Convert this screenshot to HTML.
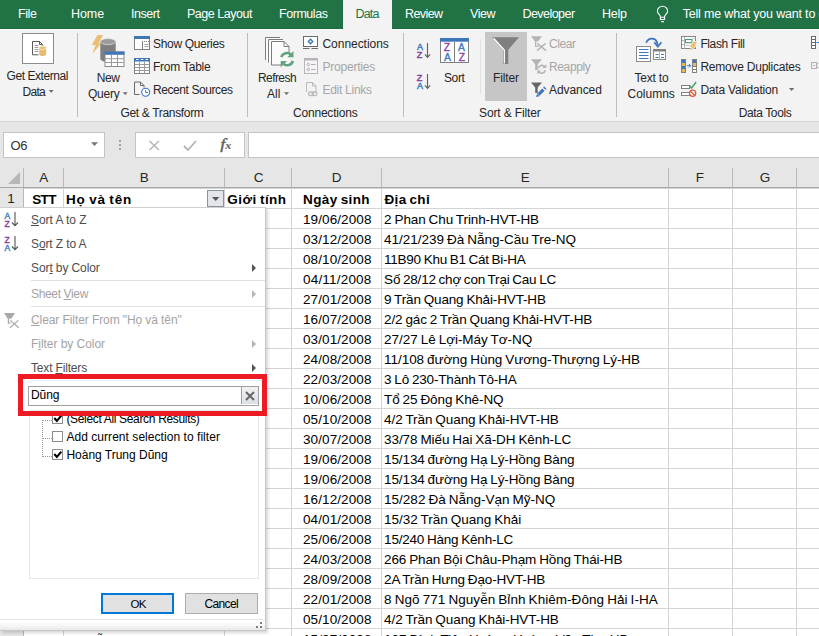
<!DOCTYPE html>
<html lang="vi">
<head>
<meta charset="utf-8">
<title>Excel – Filter</title>
<style>
html,body{margin:0;padding:0;}
body{width:819px;height:636px;overflow:hidden;position:relative;background:#e6e6e6;font-family:"Liberation Sans","DejaVu Sans",sans-serif;}
.a{position:absolute;}
.t{position:absolute;white-space:pre;line-height:16px;height:16px;color:#262626;font-size:12px;}
.t u{text-decoration:underline;text-underline-offset:1px;}
svg{position:absolute;overflow:visible;}
</style>
</head>
<body>
<!-- tab bar -->
<div class="a" style="left:0;top:0;width:819px;height:28px;background:#217346;"></div>
<div class="a" style="left:0;top:28px;width:819px;height:1px;background:#1c6b3d;"></div>
<div class="a" style="left:343px;top:0;width:49px;height:29px;background:#f3f3f3;"></div>
<!-- ribbon -->
<div class="a" style="left:0;top:29px;width:819px;height:92px;background:#f3f3f3;"></div>
<div class="a" style="left:0;top:29px;width:343px;height:1px;background:#fbfbfb;"></div>
<div class="a" style="left:392px;top:29px;width:427px;height:1px;background:#fbfbfb;"></div>
<div class="a" style="left:0;top:121px;width:819px;height:1px;background:#d4d4d4;"></div>
<!-- ribbon separators -->
<div class="a" style="left:77px;top:33px;width:1px;height:84px;background:#bcbcbc;"></div>
<div class="a" style="left:247px;top:33px;width:1px;height:84px;background:#bcbcbc;"></div>
<div class="a" style="left:403px;top:33px;width:1px;height:84px;background:#bcbcbc;"></div>
<div class="a" style="left:616px;top:33px;width:1px;height:84px;background:#bcbcbc;"></div>
<div class="a" style="left:480px;top:39px;width:1px;height:55px;background:#e0e0e0;"></div>
<!-- Get External Data icon box -->
<div class="a" style="left:22px;top:33px;width:30px;height:29px;background:#fff;border:1px solid #8c8c8c;"></div>
<!-- Filter pressed bg -->
<div class="a" style="left:485px;top:32px;width:42px;height:69px;background:#c6c6c6;"></div>
<!-- formula bar -->
<div class="a" style="left:3px;top:132px;width:100px;height:24px;background:#fff;border:1px solid #c4c4c4;"></div>
<div class="a" style="left:135px;top:132px;width:108px;height:24px;background:#fff;border:1px solid #c4c4c4;"></div>
<div class="a" style="left:248px;top:132px;width:580px;height:24px;background:#fff;border:1px solid #c4c4c4;"></div>
<!-- grid -->
<div class="a" style="left:0;top:168px;width:819px;height:20px;background:#e6e6e6;"></div>
<div class="a" style="left:0;top:188px;width:24px;height:448px;background:#e6e6e6;"></div>
<div class="a" id="cells" style="left:24px;top:188px;width:795px;height:448px;background:#fff;
 background-image:linear-gradient(#d4d4d4,#d4d4d4);background-size:100% 1px;background-repeat:no-repeat;"></div>
<div class="a" style="left:24px;top:208px;width:795px;height:1px;background:#d4d4d4;"></div>
<div class="a" style="left:0px;top:208px;width:24px;height:1px;background:#c8c8c8;"></div>
<div class="a" style="left:24px;top:228px;width:795px;height:1px;background:#d4d4d4;"></div>
<div class="a" style="left:0px;top:228px;width:24px;height:1px;background:#c8c8c8;"></div>
<div class="a" style="left:24px;top:248px;width:795px;height:1px;background:#d4d4d4;"></div>
<div class="a" style="left:0px;top:248px;width:24px;height:1px;background:#c8c8c8;"></div>
<div class="a" style="left:24px;top:268px;width:795px;height:1px;background:#d4d4d4;"></div>
<div class="a" style="left:0px;top:268px;width:24px;height:1px;background:#c8c8c8;"></div>
<div class="a" style="left:24px;top:288px;width:795px;height:1px;background:#d4d4d4;"></div>
<div class="a" style="left:0px;top:288px;width:24px;height:1px;background:#c8c8c8;"></div>
<div class="a" style="left:24px;top:308px;width:795px;height:1px;background:#d4d4d4;"></div>
<div class="a" style="left:0px;top:308px;width:24px;height:1px;background:#c8c8c8;"></div>
<div class="a" style="left:24px;top:328px;width:795px;height:1px;background:#d4d4d4;"></div>
<div class="a" style="left:0px;top:328px;width:24px;height:1px;background:#c8c8c8;"></div>
<div class="a" style="left:24px;top:348px;width:795px;height:1px;background:#d4d4d4;"></div>
<div class="a" style="left:0px;top:348px;width:24px;height:1px;background:#c8c8c8;"></div>
<div class="a" style="left:24px;top:368px;width:795px;height:1px;background:#d4d4d4;"></div>
<div class="a" style="left:0px;top:368px;width:24px;height:1px;background:#c8c8c8;"></div>
<div class="a" style="left:24px;top:388px;width:795px;height:1px;background:#d4d4d4;"></div>
<div class="a" style="left:0px;top:388px;width:24px;height:1px;background:#c8c8c8;"></div>
<div class="a" style="left:24px;top:408px;width:795px;height:1px;background:#d4d4d4;"></div>
<div class="a" style="left:0px;top:408px;width:24px;height:1px;background:#c8c8c8;"></div>
<div class="a" style="left:24px;top:428px;width:795px;height:1px;background:#d4d4d4;"></div>
<div class="a" style="left:0px;top:428px;width:24px;height:1px;background:#c8c8c8;"></div>
<div class="a" style="left:24px;top:448px;width:795px;height:1px;background:#d4d4d4;"></div>
<div class="a" style="left:0px;top:448px;width:24px;height:1px;background:#c8c8c8;"></div>
<div class="a" style="left:24px;top:468px;width:795px;height:1px;background:#d4d4d4;"></div>
<div class="a" style="left:0px;top:468px;width:24px;height:1px;background:#c8c8c8;"></div>
<div class="a" style="left:24px;top:488px;width:795px;height:1px;background:#d4d4d4;"></div>
<div class="a" style="left:0px;top:488px;width:24px;height:1px;background:#c8c8c8;"></div>
<div class="a" style="left:24px;top:508px;width:795px;height:1px;background:#d4d4d4;"></div>
<div class="a" style="left:0px;top:508px;width:24px;height:1px;background:#c8c8c8;"></div>
<div class="a" style="left:24px;top:528px;width:795px;height:1px;background:#d4d4d4;"></div>
<div class="a" style="left:0px;top:528px;width:24px;height:1px;background:#c8c8c8;"></div>
<div class="a" style="left:24px;top:548px;width:795px;height:1px;background:#d4d4d4;"></div>
<div class="a" style="left:0px;top:548px;width:24px;height:1px;background:#c8c8c8;"></div>
<div class="a" style="left:24px;top:568px;width:795px;height:1px;background:#d4d4d4;"></div>
<div class="a" style="left:0px;top:568px;width:24px;height:1px;background:#c8c8c8;"></div>
<div class="a" style="left:24px;top:588px;width:795px;height:1px;background:#d4d4d4;"></div>
<div class="a" style="left:0px;top:588px;width:24px;height:1px;background:#c8c8c8;"></div>
<div class="a" style="left:24px;top:608px;width:795px;height:1px;background:#d4d4d4;"></div>
<div class="a" style="left:0px;top:608px;width:24px;height:1px;background:#c8c8c8;"></div>
<div class="a" style="left:24px;top:628px;width:795px;height:1px;background:#d4d4d4;"></div>
<div class="a" style="left:0px;top:628px;width:24px;height:1px;background:#c8c8c8;"></div>
<div class="a" style="left:63px;top:188px;width:1px;height:448px;background:#d4d4d4;"></div>
<div class="a" style="left:63px;top:168px;width:1px;height:19px;background:#b9b9b9;"></div>
<div class="a" style="left:224px;top:188px;width:1px;height:448px;background:#d4d4d4;"></div>
<div class="a" style="left:224px;top:168px;width:1px;height:19px;background:#b9b9b9;"></div>
<div class="a" style="left:291px;top:188px;width:1px;height:448px;background:#d4d4d4;"></div>
<div class="a" style="left:291px;top:168px;width:1px;height:19px;background:#b9b9b9;"></div>
<div class="a" style="left:381px;top:188px;width:1px;height:448px;background:#d4d4d4;"></div>
<div class="a" style="left:381px;top:168px;width:1px;height:19px;background:#b9b9b9;"></div>
<div class="a" style="left:668px;top:188px;width:1px;height:448px;background:#d4d4d4;"></div>
<div class="a" style="left:668px;top:168px;width:1px;height:19px;background:#b9b9b9;"></div>
<div class="a" style="left:732px;top:188px;width:1px;height:448px;background:#d4d4d4;"></div>
<div class="a" style="left:732px;top:168px;width:1px;height:19px;background:#b9b9b9;"></div>
<div class="a" style="left:796px;top:188px;width:1px;height:448px;background:#d4d4d4;"></div>
<div class="a" style="left:796px;top:168px;width:1px;height:19px;background:#b9b9b9;"></div>
<div class="a" style="left:23px;top:168px;width:1px;height:468px;background:#b9b9b9;"></div>
<div class="a" style="left:0px;top:187px;width:819px;height:1px;background:#a8a8a8;"></div>
<svg style="left:8px;top:172px" width="12" height="12" viewBox="0 0 12 12"><path d="M12 0V12H0Z" fill="#b7b7b7"/></svg>
<div class="a" style="left:207px;top:190px;width:15px;height:15px;background:#e2e5ea;border:1px solid #8d939b;"></div>
<svg style="left:211.7px;top:197px" width="7.4" height="4" viewBox="0 0 8 4" preserveAspectRatio="none"><path d="M0 0H8L4 4Z" fill="#555"/></svg>
<div class="a" style="left:0px;top:207px;width:266px;height:424px;background:#fff;box-shadow:2px 2px 3px rgba(0,0,0,.16);border-right:1px solid #c6c6c6;border-bottom:1px solid #c6c6c6;border-top:1px solid #d0d0d0;box-sizing:border-box;"></div>
<div class="a" style="left:31px;top:280px;width:234px;height:1px;background:#e1e1e1;"></div>
<div class="a" style="left:31px;top:306px;width:234px;height:1px;background:#e1e1e1;"></div>
<div class="a" style="left:0px;top:620px;width:265px;height:10px;background:linear-gradient(#fff 20%,#eaeaea);"></div>
<div class="a" style="left:0px;top:619px;width:265px;height:1px;background:#dfe6ee;"></div>
<svg style="left:252px;top:263.5px" width="4" height="8" viewBox="0 0 4 8"><path d="M0 0L4 4L0 8Z" fill="#555"/></svg>
<svg style="left:252px;top:289.5px" width="4" height="8" viewBox="0 0 4 8"><path d="M0 0L4 4L0 8Z" fill="#b5b5b5"/></svg>
<svg style="left:252px;top:339.5px" width="4" height="8" viewBox="0 0 4 8"><path d="M0 0L4 4L0 8Z" fill="#b5b5b5"/></svg>
<svg style="left:252px;top:364px" width="4" height="8" viewBox="0 0 4 8"><path d="M0 0L4 4L0 8Z" fill="#555"/></svg>
<div class="a" style="left:29px;top:410px;width:228px;height:167px;background:#fff;border:1px solid #e3e9ef;"></div>
<svg style="left:0;top:0" width="819" height="636"><g stroke="#9a9a9a" stroke-width="1" stroke-dasharray="1 1" fill="none"><path d="M42.5 420V457"/><path d="M43 420.5H52"/><path d="M43 438.5H52"/><path d="M43 456.5H52"/></g></svg>
<svg style="left:52px;top:413px" width="11" height="11" viewBox="0 0 11 11"><rect x="0.5" y="0.5" width="10" height="10" fill="#fff" stroke="#8c8c8c"/><path d="M2.3 5L4.9 8L9.3 2.6" fill="none" stroke="#000" stroke-width="2"/></svg>
<svg style="left:52px;top:431px" width="11" height="11" viewBox="0 0 11 11"><rect x="0.5" y="0.5" width="10" height="10" fill="#fff" stroke="#8c8c8c"/></svg>
<svg style="left:52px;top:449px" width="11" height="11" viewBox="0 0 11 11"><rect x="0.5" y="0.5" width="10" height="10" fill="#fff" stroke="#8c8c8c"/><path d="M2.3 5L4.9 8L9.3 2.6" fill="none" stroke="#000" stroke-width="2"/></svg>
<div class="a" style="left:18px;top:374px;width:239px;height:31.5px;background:transparent;border:5px solid #ed1c24;z-index:5;"></div>
<div class="a" style="left:28px;top:386px;width:229px;height:18px;background:#fff;border:1px solid #a0a0a0;"></div>
<div class="a" style="left:241px;top:387px;width:16px;height:17px;background:linear-gradient(#f2f2f2,#dcdfe6);border-left:1px solid #a0a0a0;"></div>
<div class="a" style="left:31px;top:380px;width:231px;height:1px;background:#e6ebf1;"></div>
<svg style="left:245px;top:391px" width="10" height="10" viewBox="0 0 10 10"><path d="M1 1L9 9M9 1L1 9" stroke="#666" stroke-width="2" fill="none"/></svg>
<div class="a" style="left:101px;top:593px;width:69px;height:17px;background:#e1e1e1;border:2px solid #0078d7;"></div>
<div class="a" style="left:185px;top:593px;width:71px;height:19px;background:#e1e1e1;border:1px solid #adadad;"></div>
<div class="a" style="left:260px;top:622px;width:2px;height:2px;background:#7c7c7c;"></div>
<div class="a" style="left:256px;top:626px;width:2px;height:2px;background:#7c7c7c;"></div>
<div class="a" style="left:260px;top:626px;width:2px;height:2px;background:#7c7c7c;"></div>
<svg style="left:4px;top:211px" width="16" height="17" viewBox="0 0 16 17">
<text x="0.4" y="7.8" font-family="Liberation Sans, sans-serif" font-size="8.6" fill="#3f7cc0" stroke="#3f7cc0" stroke-width=".4">A</text>
<text x="0.4" y="15.5" font-family="Liberation Sans, sans-serif" font-size="8.6" fill="#8b3fa7" stroke="#8b3fa7" stroke-width=".4">Z</text>
<path d="M11 1V14.5M8 11.5L11 14.7L14 11.5" stroke="#555" stroke-width="1.1" fill="none"/></svg>
<svg style="left:4px;top:235px" width="16" height="17" viewBox="0 0 16 17">
<text x="0.4" y="7.8" font-family="Liberation Sans, sans-serif" font-size="8.6" fill="#8b3fa7" stroke="#8b3fa7" stroke-width=".4">Z</text>
<text x="0.4" y="15.5" font-family="Liberation Sans, sans-serif" font-size="8.6" fill="#3f7cc0" stroke="#3f7cc0" stroke-width=".4">A</text>
<path d="M11 1V14.5M8 11.5L11 14.7L14 11.5" stroke="#555" stroke-width="1.1" fill="none"/></svg>
<svg style="left:0;top:0" width="30" height="636" viewBox="0 0 30 636">
<path d="M4 313H15L11.2 318.8H7.8Z" fill="#aaa8aa"/><path d="M8.4 318.5V323.2H10.6" fill="none" stroke="#aaa8aa" stroke-width="1.2"/>
<path d="M10.3 320.4L18.8 327.7M18.3 320.4L10 327.7" stroke="#aaa8aa" stroke-width="1.2" fill="none"/></svg>
<svg style="left:0;top:0" width="819" height="168" viewBox="0 0 819 168">
<!-- lightbulb -->
<g fill="none" stroke="#fff" stroke-width="1.1">
<path d="M660.4 19.5V16.6c0-1.7-3-2.9-3-5.3a5.1 5.1 0 0 1 10.2 0c0 2.4-3 3.6-3 5.3V19.5z"/>
<path d="M660.4 17.3h4.2M661.2 21.6h2.7"/>
</g>
<!-- Get External Data -->
<g>
<path d="M32.5 41.5h7l2.8 2.8v1.5M32.5 41.5v13.3h6" fill="none" stroke="#5a5a5a" stroke-width="1"/>
<path d="M39.5 41.5v3h3" fill="none" stroke="#5a5a5a" stroke-width="1"/>
<path d="M34.5 45.5h4M34.5 47.5h4M34.5 49.5h4M34.5 51.5h4" stroke="#a0a0a0" stroke-width="1"/>
<path d="M39.2 48v6.3c0 1 1.6 1.8 3.5 1.8s3.5-.8 3.5-1.8V48z" fill="#e8bc72"/>
<ellipse cx="42.7" cy="47.8" rx="3.5" ry="1.7" fill="#e8bc72" stroke="#f8ecd6" stroke-width=".8"/>
</g>
<!-- New Query -->
<g>
<path d="M97.5 35H103L98.7 43.5H101L92.3 54L95.5 45H91.7z" fill="#ebbf73"/>
<path d="M100.3 41.5v17c0 2 3.4 3.5 7.7 3.5s7.7-1.5 7.7-3.5v-17z" fill="#7f7f7f"/>
<ellipse cx="108" cy="41.6" rx="7.7" ry="3" fill="#9b9b9b" stroke="#f3f3f3" stroke-width=".6"/>
<rect x="105" y="52" width="19" height="14.5" fill="#fff" stroke="#8a8a8a" stroke-width="1"/>
<rect x="104.5" y="51.5" width="20" height="3.3" fill="#3e76b8"/>
<path d="M111.5 55v11.5M117.5 55v11.5M105 58.7h19M105 62.5h19" stroke="#9a9a9a" stroke-width="1" fill="none"/>
</g>
<!-- Show Queries -->
<g>
<rect x="134.5" y="36.5" width="15" height="13" fill="#fff" stroke="#808080"/>
<rect x="134" y="36" width="16" height="3" fill="#3e76b8"/>
<path d="M142.5 41v8.5" stroke="#808080"/>
<path d="M144 41.5h1M146 41.5h1M148 41.5h1" stroke="#808080"/>
<path d="M144.5 44.5h4M144.5 46.5h4" stroke="#a0a0a0"/>
</g>
<!-- From Table -->
<g>
<rect x="134.5" y="58.5" width="15" height="15" fill="#fff" stroke="#808080"/>
<rect x="134" y="58" width="16" height="3.5" fill="#3e76b8"/>
<path d="M136 59.5h2.5M140.8 59.5h2.5M145.5 59.5h2.5" stroke="#fff" stroke-width="1"/>
<path d="M139.5 62v11.5M144.5 62v11.5M135 64.5h14M135 67.5h14M135 70.5h14" stroke="#9a9a9a" fill="none"/>
</g>
<!-- Recent Sources -->
<g fill="none">
<path d="M134.5 94.5v-12.5h6l3.5 3.5v2" stroke="#6a6a6a"/>
<path d="M140.5 82v3.5h3.5" stroke="#6a6a6a"/>
<path d="M134.5 94.5h5" stroke="#6a6a6a"/>
<circle cx="145.7" cy="92.3" r="4" fill="#fff" stroke="#3e76b8" stroke-width="1.1"/>
<path d="M145.7 89.8v2.7h2.3" stroke="#3e76b8" stroke-width="1"/>
</g>
<!-- Refresh All -->
<path d="M265.5 60V37.5H280V39.5H283V41.5H284L289 46.5V65H271.5V62.5H268.5V60Z" fill="#fbfbfb"/>
<g fill="none" stroke="#7c7c7c" stroke-width="1">
<path d="M265.5 60v-22.5h14.5"/>
<path d="M268.5 62.5v-23h14.5"/>
<path d="M271.5 65v-23.5h12.5l5 5v7M284 41.5v5h5"/>
<path d="M271.5 65h10"/>
</g>
<g fill="none" stroke="#5fa380" stroke-width="2.6">
<path d="M281.3 57.2a6 6 0 0 1 9.8-2.6"/>
<path d="M292.9 61a6 6 0 0 1-9.8 2.6"/>
</g>
<path d="M293.5 51v6.3h-6.3z" fill="#5fa380"/>
<path d="M280.7 67.2v-6.3h6.3z" fill="#5fa380"/>
<!-- Connections -->
<g>
<rect x="303.5" y="36.5" width="14" height="10" fill="#fff" stroke="#6a6a6a"/>
<path d="M303 48.5h6.5M311.5 48.5h6.5" stroke="#6a6a6a"/>
<path d="M310.5 38.3l3.2 3.2-3.2 3.2-3.2-3.2z" fill="#3e76b8"/>
<circle cx="310.5" cy="41.5" r="1.1" fill="#fff"/>
</g>
<!-- Properties (disabled) -->
<g>
<rect x="304.5" y="58.5" width="13" height="15" fill="#f7f4f7" stroke="#b9b4b9"/>
<rect x="304" y="58" width="14" height="2.5" fill="#b9b4b9"/>
<circle cx="308.3" cy="64.5" r="1.2" fill="none" stroke="#b0abb0"/>
<circle cx="308.3" cy="69.5" r="1.2" fill="none" stroke="#b0abb0"/>
<path d="M311 64.5h4.5M311 69.5h4.5" stroke="#b0abb0"/>
</g>
<!-- Edit Links (disabled) -->
<g fill="none" stroke="#bcb8bc">
<path d="M306.5 92v-9.5h6l3.5 3.5v5.5"/>
<path d="M312.5 82.5v3.5h3.5"/>
<rect x="308.5" y="92" width="5" height="3.6" rx="1.8" stroke-width="1.3"/>
<rect x="312" y="92" width="5" height="3.6" rx="1.8" stroke-width="1.3"/>
</g>
<!-- Sort A-Z small -->
<g font-family="Liberation Sans, sans-serif" font-size="9" stroke-width=".45">
<text x="417" y="49.7" fill="#3f7cc0" stroke="#3f7cc0">A</text>
<text x="416.8" y="57.7" fill="#8b3fa7" stroke="#8b3fa7">Z</text>
<text x="416.8" y="80.5" fill="#8b3fa7" stroke="#8b3fa7">Z</text>
<text x="417" y="88.7" fill="#3f7cc0" stroke="#3f7cc0">A</text>
</g>
<g fill="none" stroke="#5f5f5f" stroke-width="1.1">
<path d="M427.5 43v14M424.9 54.4l2.6 3 2.6-3"/>
<path d="M427.5 74v14.3M424.9 85.4l2.6 3 2.6-3"/>
</g>
<!-- Sort big -->
<g>
<rect x="440.5" y="38.5" width="28" height="24" fill="#fff" stroke="#808080"/>
<rect x="440" y="38" width="29" height="3.7" fill="#3e76b8"/>
<path d="M454.5 42v20.5" stroke="#808080"/>
<g font-family="Liberation Sans, sans-serif" font-size="10.3" stroke-width=".4">
<text x="443.7" y="50.8" fill="#8b3fa7" stroke="#8b3fa7">Z</text>
<text x="443.9" y="60.6" fill="#3f7cc0" stroke="#3f7cc0">A</text>
<text x="458" y="50.8" fill="#3f7cc0" stroke="#3f7cc0">A</text>
<text x="458.7" y="60.6" fill="#8b3fa7" stroke="#8b3fa7">Z</text>
</g>
</g>
<!-- Filter big funnel -->
<path d="M492 37.3h27l-10.7 12.5v14.2h-5.3v-14.2z" fill="#7f7f7f"/>
<path d="M493.6 38.2l10.7 11.9v13.4" fill="none" stroke="#fff" stroke-width="1.3"/>
<!-- Clear (disabled) -->
<path d="M531 36.2h11l-4 5.2h-3z" fill="#b4b4b4"/>
<path d="M535.6 41v5.4h3" fill="none" stroke="#b4b4b4" stroke-width="1.2"/>
<path d="M537.3 43.4l8.7 7.2M545.6 43.4l-8.6 7.2" stroke="#b4b4b4" stroke-width="1.4" fill="none"/>
<!-- Reapply (disabled) -->
<path d="M531 59.2h11l-4.3 5v5.8h-2.5v-5.8z" fill="#b4b4b4"/>
<g fill="none" stroke="#b4b4b4" stroke-width="1.6">
<path d="M538.3 68.4a3.7 3.7 0 0 1 6.4-1.8"/>
<path d="M545.3 70.2a3.7 3.7 0 0 1-6.4 1.8"/>
</g>
<path d="M546.3 64.3v3.8h-3.8z" fill="#b4b4b4"/>
<path d="M537.3 74.3v-3.8h3.8z" fill="#b4b4b4"/>
<!-- Advanced -->
<path d="M531 82.4h11l-4.3 5v5.6h-2.5v-5.6z" fill="#666"/>
<path d="M536.2 97l.8-3.3 2.5 2.5z" fill="#3e76c0"/>
<path d="M538.4 94.6l5-5" stroke="#3e76c0" stroke-width="3.3" fill="none"/>
<path d="M544.3 88.7l1-1" stroke="#3e76c0" stroke-width="3.3" fill="none"/>
<!-- Text to Columns -->
<rect x="636.5" y="46.5" width="14" height="15" fill="#fff" stroke="#8a8a8a"/>
<path d="M639 49.5h9.5M639 52.5h9.5M639 55.5h9.5M639 58.5h9.5" stroke="#3e76c0" stroke-width="1"/>
<rect x="653.5" y="49.5" width="12" height="10" fill="#fff" stroke="#8a8a8a"/>
<rect x="653" y="49" width="13" height="2.5" fill="#808080"/>
<path d="M655.5 54.5h3M661 54.5h3M655.5 57.5h3M661 57.5h3" stroke="#3e76c0"/>
<path d="M659.5 52v7.5" stroke="#b0b0b0"/>
<path d="M646.2 42.8c2-5.5 10.5-6.5 11.5 2.5" fill="none" stroke="#3e76c0" stroke-width="1.8"/>
<path d="M654.2 42.3l3.6 4.4 3.6-4.4" fill="none" stroke="#3e76c0" stroke-width="1.8"/>
<!-- Flash Fill -->
<rect x="681.5" y="36.5" width="14" height="12" fill="#fbfbfb" stroke="#858585"/>
<path d="M684.5 37v11.5M682 40.5h2M682 44.5h2" stroke="#b5b5b5" fill="none"/>
<path d="M685 45.5h5M693 38.5h2.5" stroke="#c9c9c9" fill="none"/>
<rect x="685.5" y="39.5" width="6.5" height="3.2" fill="#fff" stroke="#4a9b6e" stroke-width="1.1"/>
<path d="M693.4 41.8H697L694.6 45.5H696.4L690.2 51L691.9 46.7H689.9z" fill="#ebbf73" stroke="#f3f3f3" stroke-width="1.4" paint-order="stroke"/>
<!-- Remove Duplicates -->
<rect x="681.5" y="59.5" width="4" height="13" fill="#fff" stroke="#808080"/>
<rect x="682" y="60" width="3" height="3" fill="#3e76c0"/><rect x="682" y="63" width="3" height="3" fill="#e8b85e"/><rect x="682" y="66" width="3" height="3" fill="#3e76c0"/><rect x="682" y="69" width="3" height="3" fill="#e8b85e"/>
<rect x="692.5" y="59.5" width="4" height="13" fill="#fff" stroke="#808080"/>
<rect x="693" y="60" width="3" height="3" fill="#3e76c0"/><rect x="693" y="63" width="3" height="3" fill="#e8b85e"/>
<path d="M693 66.5h3M693 69.5h3" stroke="#808080"/>
<path d="M687 65.7h3.5M689 64l1.7 1.7-1.7 1.7" stroke="#3e76c0" fill="none"/>
<!-- Data Validation -->
<rect x="681.5" y="85.5" width="8" height="3" fill="#fff" stroke="#808080"/>
<rect x="681.5" y="92.5" width="8" height="3" fill="#fff" stroke="#808080"/>
<path d="M689.5 85.5l2 2.5 4.7-6" stroke="#4a9b6e" stroke-width="1.4" fill="none"/>
<circle cx="692.6" cy="93.3" r="3.1" fill="#fff" stroke="#e0593a" stroke-width="1.3"/>
<path d="M690.5 91.2l4.2 4.2" stroke="#e0593a" stroke-width="1.3"/>
<!-- partial icons at right edge -->
<rect x="811.5" y="36.5" width="4" height="12" fill="#fff" stroke="#6a6a6a"/>
<path d="M811.5 39.5h4M811.5 42.5h4M811.5 45.5h4" stroke="#6a6a6a"/>
<path d="M816.5 42.5h3" stroke="#3e76c0"/>
<rect x="811.5" y="62.5" width="5" height="6" fill="#f3f3f3" stroke="#b0b0b0"/>
<path d="M813 65.5h2M816.5 65l2.5-2.5M816.5 66l2.5 2.5" stroke="#b0b0b0" fill="none"/>
<!-- dropdown arrows -->
<g fill="#6a6a6a">
<path d="M48.7 90h5l-2.5 2.8z"/>
<path d="M122.7 92.3h5l-2.5 2.8z"/>
<path d="M284 92.3h5l-2.5 2.8z"/>
<path d="M789 88h5.2l-2.6 3z"/>
</g>
<!-- formula bar icons -->
<path d="M91 142.3h7l-3.5 3.7z" fill="#777"/>
<rect x="119" y="140" width="2" height="2" fill="#a3a3a3"/><rect x="119" y="144" width="2" height="2" fill="#a3a3a3"/><rect x="119" y="148" width="2" height="2" fill="#a3a3a3"/>
<path d="M149.5 141l9.5 9M159 141l-9.5 9" stroke="#b4b4b4" stroke-width="1.4" fill="none"/>
<path d="M184 146l4 4 8-9" stroke="#b4b4b4" stroke-width="1.8" fill="none"/>
<g font-family="Liberation Serif, serif" font-style="italic" fill="#5c5c5c"><text transform="translate(220.3 148.8) scale(1.3 1)" font-size="14" stroke="#5c5c5c" stroke-width=".35">f</text><text transform="translate(225.2 149.2) scale(1.15 1)" font-size="10.5" font-weight="bold">x</text></g>
</svg>

<span class="t" style="left:18.0px;top:6.0px;font-size:12.5px;letter-spacing:-0.414px;color:#ffffff;">File</span>
<span class="t" style="left:71.0px;top:6.0px;font-size:12.5px;letter-spacing:-0.086px;color:#ffffff;">Home</span>
<span class="t" style="left:131.0px;top:6.0px;font-size:12.5px;letter-spacing:-0.461px;color:#ffffff;">Insert</span>
<span class="t" style="left:187.0px;top:6.0px;font-size:12.5px;letter-spacing:-0.473px;color:#ffffff;">Page Layout</span>
<span class="t" style="left:279.0px;top:6.0px;font-size:12.5px;letter-spacing:-0.449px;color:#ffffff;">Formulas</span>
<span class="t" style="left:355.5px;top:6.0px;font-size:12.5px;letter-spacing:-0.852px;color:#217346;">Data</span>
<span class="t" style="left:405.0px;top:6.0px;font-size:12.5px;letter-spacing:-0.583px;color:#ffffff;">Review</span>
<span class="t" style="left:470.0px;top:6.0px;font-size:12.5px;letter-spacing:-0.469px;color:#ffffff;">View</span>
<span class="t" style="left:522.5px;top:6.0px;font-size:12.5px;letter-spacing:-0.554px;color:#ffffff;">Developer</span>
<span class="t" style="left:602.0px;top:6.0px;font-size:12.5px;letter-spacing:-0.255px;color:#ffffff;">Help</span>
<span class="t" style="left:682.7px;top:6.0px;font-size:12.5px;letter-spacing:-0.183px;color:#ffffff;">Tell me what you want to do</span>
<span class="t" style="left:6.5px;top:67.5px;font-size:12px;letter-spacing:-0.434px;">Get External</span>
<span class="t" style="left:22.5px;top:83.5px;font-size:12px;letter-spacing:-0.715px;">Data</span>
<span class="t" style="left:96.8px;top:70.0px;font-size:12px;letter-spacing:-0.422px;">New</span>
<span class="t" style="left:88.0px;top:85.5px;font-size:12px;letter-spacing:-0.237px;">Query</span>
<span class="t" style="left:153.0px;top:35.5px;font-size:12px;letter-spacing:-0.323px;">Show Queries</span>
<span class="t" style="left:153.0px;top:58.5px;font-size:12px;letter-spacing:-0.231px;">From Table</span>
<span class="t" style="left:153.0px;top:81.5px;font-size:12px;letter-spacing:-0.421px;">Recent Sources</span>
<span class="t" style="left:120.5px;top:105.0px;font-size:12px;letter-spacing:-0.335px;">Get &amp; Transform</span>
<span class="t" style="left:258.0px;top:70.0px;font-size:12px;letter-spacing:-0.576px;">Refresh</span>
<span class="t" style="left:267.0px;top:85.5px;font-size:12px;letter-spacing:0.052px;">All</span>
<span class="t" style="left:322.5px;top:35.5px;font-size:12px;letter-spacing:-0.043px;">Connections</span>
<span class="t" style="left:322.5px;top:58.5px;font-size:12px;letter-spacing:-0.220px;color:#a6a6a6;">Properties</span>
<span class="t" style="left:322.5px;top:81.5px;font-size:12px;letter-spacing:-0.278px;color:#a6a6a6;">Edit Links</span>
<span class="t" style="left:293.0px;top:105.0px;font-size:12px;letter-spacing:-0.202px;">Connections</span>
<span class="t" style="left:444.0px;top:70.0px;font-size:12px;letter-spacing:-0.379px;">Sort</span>
<span class="t" style="left:493.0px;top:70.0px;font-size:12px;letter-spacing:-0.154px;">Filter</span>
<span class="t" style="left:549.0px;top:35.5px;font-size:12px;letter-spacing:-0.438px;color:#a6a6a6;">Clear</span>
<span class="t" style="left:549.0px;top:58.5px;font-size:12px;letter-spacing:-0.362px;color:#a6a6a6;">Reapply</span>
<span class="t" style="left:549.0px;top:81.5px;font-size:12px;letter-spacing:-0.078px;">Advanced</span>
<span class="t" style="left:479.0px;top:105.0px;font-size:12px;letter-spacing:-0.124px;">Sort &amp; Filter</span>
<span class="t" style="left:634.4px;top:70.0px;font-size:12px;letter-spacing:-0.180px;">Text to</span>
<span class="t" style="left:627.5px;top:85.5px;font-size:12px;letter-spacing:-0.008px;">Columns</span>
<span class="t" style="left:700.4px;top:35.5px;font-size:12px;letter-spacing:-0.392px;">Flash Fill</span>
<span class="t" style="left:700.4px;top:58.5px;font-size:12px;letter-spacing:-0.232px;">Remove Duplicates</span>
<span class="t" style="left:700.4px;top:81.5px;font-size:12px;letter-spacing:-0.193px;">Data Validation</span>
<span class="t" style="left:738.8px;top:105.0px;font-size:12px;letter-spacing:-0.398px;">Data Tools</span>
<span class="t" style="left:10.5px;top:137.6px;font-size:13px;letter-spacing:-0.422px;color:#333;">O6</span>
<span class="t" style="left:39.3px;top:170.0px;font-size:13.5px;">A</span>
<span class="t" style="left:139.8px;top:170.0px;font-size:13.5px;">B</span>
<span class="t" style="left:253.8px;top:170.0px;font-size:13.5px;">C</span>
<span class="t" style="left:331.8px;top:170.0px;font-size:13.5px;">D</span>
<span class="t" style="left:520.8px;top:170.0px;font-size:13.5px;">E</span>
<span class="t" style="left:695.8px;top:170.0px;font-size:13.5px;">F</span>
<span class="t" style="left:759.8px;top:170.0px;font-size:13.5px;">G</span>
<span class="t" style="left:7.3px;top:191.2px;font-size:13.5px;">1</span>
<span class="t" style="left:32.2px;top:191.8px;font-size:13.5px;letter-spacing:-0.567px;font-weight:bold;color:#000000;word-spacing:-1px;">STT</span>
<span class="t" style="left:66.0px;top:191.8px;font-size:13.5px;letter-spacing:0.804px;font-weight:bold;color:#000000;word-spacing:-1px;">Họ và tên</span>
<span class="t" style="left:227.3px;top:191.8px;font-size:13.5px;letter-spacing:0.456px;font-weight:bold;color:#000000;word-spacing:-1px;">Giới tính</span>
<span class="t" style="left:303.0px;top:191.8px;font-size:13.5px;letter-spacing:0.387px;font-weight:bold;color:#000000;word-spacing:-1px;">Ngày sinh</span>
<span class="t" style="left:384.5px;top:191.8px;font-size:13.5px;letter-spacing:0.319px;font-weight:bold;color:#000000;word-spacing:-1px;">Địa chỉ</span>
<span class="t" style="left:303.0px;top:212.0px;font-size:13.5px;letter-spacing:0.092px;color:#000000;">19/06/2008</span>
<span class="t" style="left:384.1px;top:212.0px;font-size:13.5px;letter-spacing:-0.090px;color:#000000;word-spacing:-.7px;">2 Phan Chu Trinh-HVT-HB</span>
<span class="t" style="left:303.0px;top:232.0px;font-size:13.5px;letter-spacing:0.092px;color:#000000;">03/12/2008</span>
<span class="t" style="left:384.1px;top:232.0px;font-size:13.5px;letter-spacing:-0.017px;color:#000000;word-spacing:-.7px;">41/21/239 Đà Nẵng-Cầu Tre-NQ</span>
<span class="t" style="left:303.0px;top:252.0px;font-size:13.5px;letter-spacing:0.092px;color:#000000;">08/10/2008</span>
<span class="t" style="left:384.1px;top:252.0px;font-size:13.5px;letter-spacing:-0.257px;color:#000000;word-spacing:-.7px;">11B90 Khu B1 Cát Bi-HA</span>
<span class="t" style="left:303.0px;top:272.0px;font-size:13.5px;letter-spacing:0.192px;color:#000000;">04/11/2008</span>
<span class="t" style="left:384.1px;top:272.0px;font-size:13.5px;letter-spacing:-0.215px;color:#000000;word-spacing:-.7px;">Số 28/12 chợ con Trại Cau LC</span>
<span class="t" style="left:303.0px;top:292.0px;font-size:13.5px;letter-spacing:0.092px;color:#000000;">27/01/2008</span>
<span class="t" style="left:384.1px;top:292.0px;font-size:13.5px;letter-spacing:-0.147px;color:#000000;word-spacing:-.7px;">9 Trần Quang Khải-HVT-HB</span>
<span class="t" style="left:303.0px;top:312.0px;font-size:13.5px;letter-spacing:0.092px;color:#000000;">16/07/2008</span>
<span class="t" style="left:384.1px;top:312.0px;font-size:13.5px;letter-spacing:-0.118px;color:#000000;word-spacing:-.7px;">2/2 gác 2 Trần Quang Khải-HVT-HB</span>
<span class="t" style="left:303.0px;top:332.0px;font-size:13.5px;letter-spacing:0.092px;color:#000000;">03/01/2008</span>
<span class="t" style="left:384.1px;top:332.0px;font-size:13.5px;letter-spacing:-0.037px;color:#000000;word-spacing:-.7px;">27/27 Lê Lợi-Máy Tơ-NQ</span>
<span class="t" style="left:303.0px;top:352.0px;font-size:13.5px;letter-spacing:0.092px;color:#000000;">24/08/2008</span>
<span class="t" style="left:384.1px;top:352.0px;font-size:13.5px;letter-spacing:-0.052px;color:#000000;word-spacing:-.7px;">11/108 đường Hùng Vương-Thượng Lý-HB</span>
<span class="t" style="left:303.0px;top:372.0px;font-size:13.5px;letter-spacing:0.092px;color:#000000;">22/03/2008</span>
<span class="t" style="left:384.1px;top:372.0px;font-size:13.5px;letter-spacing:-0.168px;color:#000000;word-spacing:-.7px;">3 Lô 230-Thành Tô-HA</span>
<span class="t" style="left:303.0px;top:392.0px;font-size:13.5px;letter-spacing:0.092px;color:#000000;">10/06/2008</span>
<span class="t" style="left:384.1px;top:392.0px;font-size:13.5px;letter-spacing:-0.092px;color:#000000;word-spacing:-.7px;">Tổ 25 Đông Khê-NQ</span>
<span class="t" style="left:303.0px;top:412.0px;font-size:13.5px;letter-spacing:0.092px;color:#000000;">05/10/2008</span>
<span class="t" style="left:384.1px;top:412.0px;font-size:13.5px;letter-spacing:-0.069px;color:#000000;word-spacing:-.7px;">4/2 Trần Quang Khải-HVT-HB</span>
<span class="t" style="left:303.0px;top:432.0px;font-size:13.5px;letter-spacing:0.092px;color:#000000;">30/07/2008</span>
<span class="t" style="left:384.1px;top:432.0px;font-size:13.5px;letter-spacing:-0.082px;color:#000000;word-spacing:-.7px;">33/78 Miếu Hai Xã-DH Kênh-LC</span>
<span class="t" style="left:303.0px;top:452.0px;font-size:13.5px;letter-spacing:0.092px;color:#000000;">19/06/2008</span>
<span class="t" style="left:384.1px;top:452.0px;font-size:13.5px;letter-spacing:-0.119px;color:#000000;word-spacing:-.7px;">15/134 đường Hạ Lý-Hồng Bàng</span>
<span class="t" style="left:303.0px;top:472.0px;font-size:13.5px;letter-spacing:0.092px;color:#000000;">19/06/2008</span>
<span class="t" style="left:384.1px;top:472.0px;font-size:13.5px;letter-spacing:-0.119px;color:#000000;word-spacing:-.7px;">15/134 đường Hạ Lý-Hồng Bàng</span>
<span class="t" style="left:303.0px;top:492.0px;font-size:13.5px;letter-spacing:0.092px;color:#000000;">16/12/2008</span>
<span class="t" style="left:384.1px;top:492.0px;font-size:13.5px;color:#000000;word-spacing:-.7px;">15/282 Đà Nẵng-Vạn Mỹ-NQ</span>
<span class="t" style="left:303.0px;top:512.0px;font-size:13.5px;letter-spacing:0.092px;color:#000000;">04/01/2008</span>
<span class="t" style="left:384.1px;top:512.0px;font-size:13.5px;letter-spacing:-0.020px;color:#000000;word-spacing:-.7px;">15/32 Trần Quang Khải</span>
<span class="t" style="left:303.0px;top:532.0px;font-size:13.5px;letter-spacing:0.092px;color:#000000;">25/06/2008</span>
<span class="t" style="left:384.1px;top:532.0px;font-size:13.5px;letter-spacing:-0.208px;color:#000000;word-spacing:-.7px;">15/240 Hàng Kênh-LC</span>
<span class="t" style="left:303.0px;top:552.0px;font-size:13.5px;letter-spacing:0.092px;color:#000000;">24/03/2008</span>
<span class="t" style="left:384.1px;top:552.0px;font-size:13.5px;letter-spacing:-0.120px;color:#000000;word-spacing:-.7px;">266 Phan Bội Châu-Phạm Hồng Thái-HB</span>
<span class="t" style="left:303.0px;top:572.0px;font-size:13.5px;letter-spacing:0.092px;color:#000000;">28/09/2008</span>
<span class="t" style="left:384.1px;top:572.0px;font-size:13.5px;letter-spacing:-0.153px;color:#000000;word-spacing:-.7px;">2A Trần Hưng Đạo-HVT-HB</span>
<span class="t" style="left:303.0px;top:592.0px;font-size:13.5px;letter-spacing:0.092px;color:#000000;">22/01/2008</span>
<span class="t" style="left:384.1px;top:592.0px;font-size:13.5px;letter-spacing:0.041px;color:#000000;word-spacing:-.7px;">8 Ngõ 771 Nguyễn Bỉnh Khiêm-Đông Hải I-HA</span>
<span class="t" style="left:303.0px;top:612.0px;font-size:13.5px;letter-spacing:0.092px;color:#000000;">05/10/2008</span>
<span class="t" style="left:384.1px;top:612.0px;font-size:13.5px;letter-spacing:-0.069px;color:#000000;word-spacing:-.7px;">4/2 Trần Quang Khải-HVT-HB</span>
<span class="t" style="left:303.0px;top:632.0px;font-size:13.5px;letter-spacing:0.092px;color:#000000;">15/07/2008</span>
<span class="t" style="left:384.1px;top:632.0px;font-size:13.5px;letter-spacing:-0.049px;color:#000000;word-spacing:-.7px;">107 Đình Tiên Hoàng-Hoàng Văn Thụ-HB</span>
<span class="t" style="left:3.6px;top:632.8px;font-size:13.5px;letter-spacing:-0.116px;">23</span>
<span class="t" style="left:36.3px;top:632.8px;font-size:13.5px;letter-spacing:-0.066px;color:#000000;">22</span>
<span class="t" style="left:66.5px;top:632.8px;font-size:13.5px;letter-spacing:-0.358px;color:#000000;">Nguyễn Hoàng Hiệp</span>
<span class="t" style="left:228.0px;top:632.8px;font-size:13.5px;letter-spacing:-0.505px;color:#000000;">Nam</span>
<span class="t" style="left:31.0px;top:212.0px;font-size:12px;letter-spacing:-0.048px;color:#4d4d4d;"><u>S</u>ort A to Z</span>
<span class="t" style="left:31.0px;top:236.0px;font-size:12px;letter-spacing:-0.109px;color:#4d4d4d;">S<u>o</u>rt Z to A</span>
<span class="t" style="left:31.0px;top:259.5px;font-size:12px;letter-spacing:-0.102px;color:#4d4d4d;">Sor<u>t</u> by Color</span>
<span class="t" style="left:31.0px;top:285.5px;font-size:12px;letter-spacing:-0.350px;color:#a3a3a3;">Sheet <u>V</u>iew</span>
<span class="t" style="left:31.0px;top:312.0px;font-size:12px;letter-spacing:-0.087px;color:#a3a3a3;"><u>C</u>lear Filter From "Họ và tên"</span>
<span class="t" style="left:31.0px;top:335.5px;font-size:12px;letter-spacing:-0.046px;color:#a3a3a3;">F<u>i</u>lter by Color</span>
<span class="t" style="left:31.0px;top:360.0px;font-size:12px;letter-spacing:-0.168px;color:#4d4d4d;">Text <u>F</u>ilters</span>
<span class="t" style="left:31.0px;top:387.0px;font-size:12px;letter-spacing:-0.047px;color:#000000;">Dũng</span>
<span class="t" style="left:66.4px;top:410.5px;font-size:12px;letter-spacing:-0.332px;color:#000000;">(Select All Search Results)</span>
<span class="t" style="left:66.4px;top:428.5px;font-size:12px;letter-spacing:0.049px;color:#000000;">Add current selection to filter</span>
<span class="t" style="left:66.4px;top:447.0px;font-size:12px;letter-spacing:-0.007px;color:#000000;">Hoàng Trung Dũng</span>
<span class="t" style="left:130.6px;top:595.6px;font-size:11.5px;letter-spacing:-0.912px;color:#000000;">OK</span>
<span class="t" style="left:204.5px;top:595.5px;font-size:12px;letter-spacing:-0.643px;color:#000000;">Cancel</span>
</body>
</html>
